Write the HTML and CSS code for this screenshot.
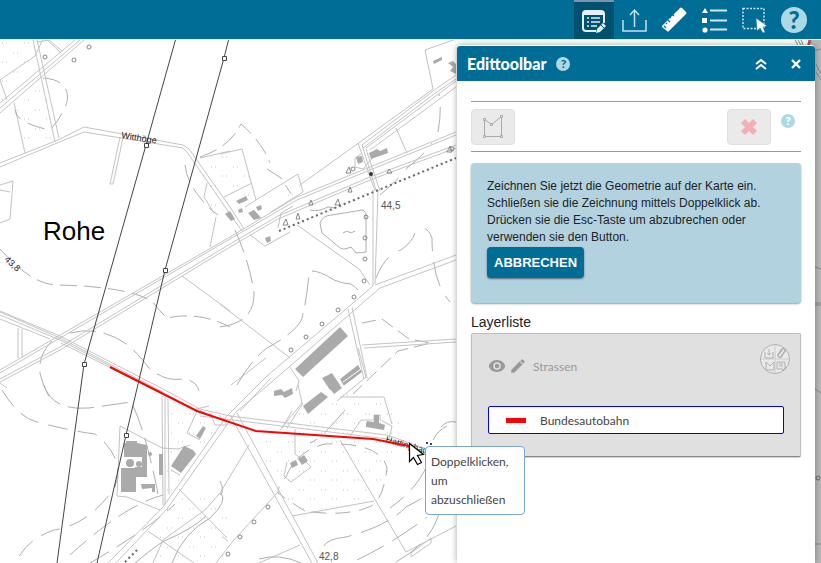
FILE: index.html
```html
<!DOCTYPE html>
<html lang="de">
<head>
<meta charset="utf-8">
<meta name="viewport" content="width=device-width, initial-scale=1">
<title>Edittoolbar</title>
<link rel="stylesheet" href="styles.css">
</head>
<body>
<header class="topbar">
  <button class="tool tool-active" type="button" aria-label="Editieren">
    <svg width="40" height="40" viewBox="0 0 40 40" fill="none" stroke="#e4f0f4" stroke-width="2">
      <path d="M22 31H12q-3 0-3-3V14q0-3 3-3h15q3 0 3 3v9" />
      <path d="M9 13h21" stroke-width="4"/>
      <path d="M17 18h9M17 22h9M17 26h6M13 18h2M13 22h2M13 26h2" stroke-width="1.6"/>
      <path d="m22 33 1-4 6-6 3 3-6 6z" fill="#e4f0f4" stroke="none"/><path d="m27 25 3 3" stroke="#00506f" stroke-width="1"/>
    </svg>
  </button>
  <button class="tool" type="button" aria-label="Export">
    <svg width="40" height="40" viewBox="0 0 40 40" fill="none" stroke="#c5e2ea" stroke-width="1.5"><path d="M9 20v11h23V20M20.500 27V10M16 15l4.500-5 4.500 5"/></svg>
  </button>
  <button class="tool" type="button" aria-label="Messen">
    <svg width="40" height="40" viewBox="0 0 40 40"><path d="M8 26 26 8q1-1 2 0l4 4q1 1 0 2L15 31q-1 1-2 0l-5-4z" fill="#fff"/><path d="m10 26 2 2m0-5 1 1m1-4 2 2m0-5 1 1m1-4 2 2m0-5 1 1m1-4 2 2" stroke="#006d96" stroke-width="1.200"/></svg>
  </button>
  <button class="tool" type="button" aria-label="Legende">
    <svg width="40" height="40" viewBox="0 0 40 40" fill="#fff"><path d="m8 13 3-5 3 5zM8 18h5v5H8z"/><circle cx="11" cy="30" r="2.600"/><path d="M16 10.500h17M16 20.500h17M16 29.500h17" stroke="#d4eaf0" stroke-width="1.800"/></svg>
  </button>
  <button class="tool" type="button" aria-label="Auswahl">
    <svg width="40" height="40" viewBox="0 0 40 40"><path d="M9 8.500h21v20H9z" fill="none" stroke="#d4eaf0" stroke-width="1.400" stroke-dasharray="2 1.500"/><path d="m22 18 1 13 3-3 3 5 2-1-2-5 4-1z" fill="#fff" stroke="#006d96" stroke-width=".5"/></svg>
  </button>
  <button class="tool help-large" type="button" aria-label="Hilfe"><span>?</span></button>
</header>
<main class="workspace">
  <svg class="map" viewBox="0 40 821 523" preserveAspectRatio="xMinYMin slice" role="img" aria-label="Karte">
    <defs>
      <pattern id="grass" width="22" height="19" patternUnits="userSpaceOnUse"><path d="M2 5h1m3 0h1M13 15h1m3 0h1" stroke="#c4c4c4" stroke-width="1"/></pattern>
    </defs>
    <g fill="url(#grass)">
      <path d="M0 40h33l2 20-26 36L0 105zM16 107l28-24 11 57-30 12zM200 160l20-10v60h-9zM220 154l22-5 13 50-32-6zM270 198l27-24 5 18-37 17z"/>
      <path d="m170 396 60 24-65 95zM150 530l40-40 35 5 10 70H150zM253 437l86-46 54 10 12 45-33 60-80 5z"/>
    </g>
    <g class="fine">
      <path d="M0 80 35 56l9-19 17 16M0 80l7 20M14 103l11 50M37 42l12-2 13 11M0 185l13-4-3 38L0 223M0 190l10 2M200 158l30-7M207 183l-3 14 10 16"/>
      <path d="M220 154l22-5 14 51-11 7M224 197l16-8 12-6M256 200l42-26 5 18-32 20M300 185l60-43 73-53-8-39 31-11M396 128l11 25M375 155l-12 14-8-2v-9l6-4"/>
      <path d="M182 276 230 311M250 235l15 11 25-14M297 225l62 44 11 16M220 304l70 54M290 367l9 14-3 10M358 348l8 29-29 24M216 217l-6 30"/>
      <path d="M18 328v30M22 329v28M0 383l7 5M162 448l-42-22-3 70 10 1 33 13M162 448l16 1 12-4M179 489l47 48M148 531l46 32M205 413l-7-4-11 24 13 7M192 410l17-4M210 413l5 12h12l-8-10M171 470l9 5M231 385l35-27M298 385l4 18-22 27M303 403l-16 25M340 397h44l8 27M350 436l11-16h13v-5h6v5l12 6-3 13M340 440l66 112 50-26M292 516l82-15M295 429v25l10 7 6 6M287 462l-3 14 7 6 20-15M249 445l-29 48-15 17-42 30-10 23M278 492l-45 49-17 22M259 563l41-18M223 537l5 4"/>
      <path d="M278 228l3-15 12-7M411 553l20-15v5l-20 14z"/>
    </g>
    <g class="contour">
      <path d="M43 78q28 2 24 24-5 15-17 28-34-7-35-20" stroke-dasharray="18 8"/>
      <path d="M0 249Q30 283 55 285q70 1 97 16 9 12 15 17 32-7 63 9" stroke-dasharray="17 7"/>
      <path d="M44 385q8 26 45 23l42-6q14 26 27 92" stroke-dasharray="26 8"/>
      <path d="M52 341q-14 14-12 32 3 14 10 25M70 333q30-8 58 12 14 13 20 22 16 15 35 12 13 1 16 12" stroke-dasharray="26 8"/>
      <path d="M2 390q17 28 35 32 34 9 58 12 31 24 20 53-26 38-61 43-29 10-38 33" stroke-dasharray="20 10"/>
      <path d="M70 555q55-50 93-60M90 563q60-35 85-59" stroke-dasharray="22 9"/>
      <path d="M185 165q2 18 17 35 6 8 16 15M200 157q30-10 41-33 21 18 29 39m-3 6 14 9 10 16" stroke-dasharray="18 7"/>
      <path d="M235 230q15 34 19 63 1 30-35 34" stroke-dasharray="24 8"/>
      <path d="M237 385q14-25 30-37 31-17 35-30 5-20 7-44" stroke-dasharray="28 8"/>
      <path d="M312 271q8 0 22 9 10 4 17 4 3 2 7 6"/>
      <path d="M362 323l20-4 27 20 22 4-33 8-45 43" stroke-dasharray="14 6"/>
      <path d="M376 278q9-23 25-28 11-8 14-17 11-11 17 5 0 44 18 64M438 132q4-21 1-38M380 195q20-17 27-27 16-12 25-25" stroke-dasharray="25 11"/>
      <path d="M305 511q-13-8-27-18 0-9 8-16 10-26 39-33 56-2 62 24-4 34-18 39-24 10-64 4" stroke-dasharray="15 9"/>
      <path d="M427 465q-9 23-37 43M447 426q-9 4-14 14M456 422q-9-2-15 5M324 546q3-7 22-9 42-11 60-30l50-27M357 560q39-19 70-43M440 510q-8 33-46 53M345 410q-26 31-35 33" stroke-dasharray="30 10"/>
      <path d="M172 563q11-30 38-45 18-17 11-25M135 563q19-16 29-22 27-11 42-25M259 559q20-6 42 4M220 495q5-4 0-14M322 233l-2-10q3-8 12-8l30-5q5 1 4 8v34l-10 1-5-6q-9 4-12 0z"/>
      <path d="M343 233q4-3 6-1t6-1M310 210q8 2 18-3l7 1"/>
    </g>
    <g class="road">
      <path d="M33 40l22 102M37 40l22 98M0 103 75 40M0 108 80 40M0 113 84 40"/>
      <path d="M0 163 58 140 84 127 183 145 189 149 230 207M0 167 57 143 84 132 183 148 187 152 230 214M120 137l-10 47h3l10-46M230 207l14 22M230 214l12 17"/>
      <path d="M0 370 55 338 230 237 297 197 370 167 456 132M0 373 60 338 230 239 297 200 370 170 456 135M0 379 60 347 230 244 278 216 370 177 456 145M0 382 60 350 230 247 278 219 370 180 456 148"/>
      <path d="M362 145l71-54 23-16M363 148l71-54 22-15M366 148l90-67M370 150l86-63M362 145l14 45M366 149l14 42M358 143l17 48"/>
      <path d="M0 311 60 336 163 389 200 409 230 416 387 435 427 449M0 315 60 340 163 393 200 413M0 319 50 339M61 343l110 55M0 312l60 26 103 54M200 416l187 23 40 14"/>
      <path d="M373 190v96L267 376 226 417 163 507 108 563M378 190l-3 94M375 285l81-30M380 288l76-28M380 288 267 386 236 412 167 509 116 563M348 309l16 70M352 307l15 71M362 345l94-6M364 348l92-6"/>
      <path d="M162 396l1 109M165 397v108M168 399l1 95M230 415l82 148M237 413l81 150M271 378l-31 33M292 411l-10 17"/>
    </g>
    <g class="building">
      <path d="m295 369 45-42 8 9-45 41zM322 378l10-5 8 12-10 5zM340 379l18-14 4 7-18 14zM303 406l18-14 7 5-20 17zM328 386l8-5 6 7-8 6zM274 391l7-2 3 3 8-4 1 6-8 4-3-3-8 1z"/>
      <path d="m369 153 8-4 3 2 7-3 1 5-17 6zM356 157l6-1 1 6-5 2zM433 61l9-4v3l-8 4zM448 63l5-2 3 3v10l-6-3 3-4zM236 201l10-5 2 4-9 4zM238 210l4-2 1 4-4 1zM225 214l5-3 5 8-4 2zM248 213l6-3 3 3 4 5-7 2zM256 207l5-2 1 4-4 2zM265 238l5-2 1 5-4 2z"/>
      <path d="M124 443h2v-2h11v2l10 2v32h-11v15h-15v-24h14v-11h-11zM159 454h4v21h-4zM141 484h14v8h-3v-4l-10 1zM184 446l9 4 3 4-15 19-10-7zM196 436l7-10 3 2-6 11zM366 424l1-3 7 1v-7h5v8l6 2-1 5-18-3zM290 463l6-3 2 5-6 3zM298 459l6-4 4 6-6 4z"/>
      <path d="M126 457h16v10h-16z" fill="#fff"/>
      <circle cx="130" cy="463" r="4"/><circle cx="139" cy="464" r="3"/><circle cx="150" cy="454" r="2"/>
      <path d="m343 382 18-13m-17 17 18-13" stroke="#fff" stroke-width="1" fill="none"/>
    </g>
    <g class="trees">
      <circle cx="45" cy="57" r="2"/><circle cx="74" cy="60" r="2"/><circle cx="89" cy="47" r="2"/><circle cx="366" cy="217" r="2"/><circle cx="365" cy="238" r="2"/><circle cx="365" cy="259" r="2"/><circle cx="364" cy="281" r="2"/><circle cx="354" cy="297" r="2"/><circle cx="338" cy="310" r="2"/><circle cx="322" cy="324" r="2"/><circle cx="306" cy="337" r="2"/><circle cx="291" cy="350" r="2"/><circle cx="268" cy="507" r="2"/><circle cx="254" cy="522" r="2"/><circle cx="240" cy="537" r="2"/><circle cx="228" cy="554" r="2"/><circle cx="452" cy="149" r="2"/><circle cx="353" cy="169" r="2"/>
      <path d="m346 173 3-6 2 6zm2 19 2-5 2 5zm-39 13 2-5 2 5zm26 0 3-6 2 6zm-39 14 2-6 2 6zm-13 6 3-6 2 6zm164-73 3-6 2 6zM387 173l2-4 3 4z"/>
    </g>
    <path d="M279 231 456 158" class="hedge"/>
    <path d="m125 562 13-13" class="hedge"/>
    <circle cx="371" cy="174" r="2" fill="#333"/>
    <g class="power"><path d="M176 38 146 145 84 364 57 563M229 38l-5 20-59 212-39 165-29 128"/>
      <path d="M144.500 143.500h4v4h-4zM222.500 56.500h4v4h-4zM163.500 268.500h4v4h-4zM82.500 362.500h4v4h-4zM124.500 433.500h4v4h-4z" fill="#fff"/></g>
    <g class="map-label">
      <text x="43" y="240" class="place">Rohe</text>
      <text x="121" y="138" transform="rotate(9 121 138)" class="street">Witthöge</text>
      <text x="4" y="260" transform="rotate(43 4 260)" class="street">43,8</text>
      <text x="381" y="209" class="height">44,5</text><text x="319" y="560" class="height">42,8</text>
      <text x="385" y="442" transform="rotate(16 385 442)" class="street">Hattinghaus</text>
    </g>
    <path d="m110 367 87 44 59 20 117 8 36 7" fill="none" stroke="#f00" stroke-width="2"/>
    <path d="M426 443h2m2 1h2" stroke="#444" stroke-width="2"/>
    <path d="m409.500 443.500v18l4-4 4 7 4-2-4-7 6-1z" fill="#fff" stroke="#000" stroke-width="1.200"/>
    <path d="M811 40h10v523h-10z" fill="#b8b8b8"/><path d="m810 40-2 8" stroke="#b75353" stroke-width="3"/>
    <path d="m795 40 4 7m-1-7 4 7m-1-7 3 7m12 17 5 10m-5-2 5 8M812 51l9-2M815 267l6 2M815 303h6m-6 2h6M815 389l6 4M815 544h6" stroke="#888" fill="none"/>
    <circle cx="818" cy="478" r="2" stroke="#666" fill="none"/>
  </svg>

  <section class="panel" aria-labelledby="panel-title">
    <header class="panel-head">
      <h1 id="panel-title">Edittoolbar</h1>
      <button class="help-small" type="button" aria-label="Hilfe">?</button>
      <button class="head-button head-first" type="button" aria-label="Einklappen"><svg width="14" height="14" viewBox="0 0 14 14" fill="none" stroke="#fff" stroke-width="2"><path d="m2 7 5-4 5 4M2 12l5-4 5 4"/></svg></button>
      <button class="head-button" type="button" aria-label="Schließen"><svg width="14" height="14" viewBox="0 0 14 14" stroke="#fff" stroke-width="2.400"><path d="m3 3 8 8M11 3l-8 8"/></svg></button>
    </header>
    <div class="panel-body">
      <div class="edit-tools">
        <button class="edit-button" type="button" aria-label="Fläche zeichnen" disabled>
          <svg width="24" height="24" viewBox="0 0 24 24" fill="none" stroke="#aaa"><path d="M3.500 4.500v17h17v-20l-10 8z"/><path d="M2.500 3.500h2v2h-2zM2.500 20.500h2v2h-2zM19.500 20.500h2v2h-2zM19.500.5h2v2h-2zM9.500 8.500h2v2h-2z" fill="#eaeaea"/></svg>
        </button>
        <button class="edit-button edit-delete" type="button" aria-label="Löschen" disabled>
          <svg width="18" height="18" viewBox="0 0 18 18" fill="#f2b0b0"><path d="m5 1 4 4 4-4 4 4-4 4 4 4-4 4-4-4-4 4-4-4 4-4-4-4z"/></svg>
        </button>
        <button class="help-small" type="button" aria-label="Hilfe">?</button>
      </div>
      <div class="notice">
        <p>Zeichnen Sie jetzt die Geometrie auf der Karte ein. Schließen sie die Zeichnung mittels Doppelklick ab. Drücken sie die Esc-Taste um abzubrechen oder verwenden sie den Button.</p>
        <button class="cancel" type="button">ABBRECHEN</button>
      </div>
      <h2 class="list-title">Layerliste</h2>
      <div class="layers">
        <div class="layer-head">
          <svg width="18" height="18" viewBox="0 0 24 24" fill="#999"><path d="M12 4C6 4 2 8 1 12c1 4 5 8 11 8s10-4 11-8c-1-4-5-8-11-8zm0 13a5 5 0 1 1 0-10 5 5 0 0 1 0 10z"/><circle cx="12" cy="12" r="3"/></svg>
          <svg width="18" height="18" viewBox="0 0 24 24" fill="#999"><path d="M3 17.200V21h3.800L18 10l-4-4zM20.700 7a1 1 0 0 0 0-1.400L18.400 3.300a1 1 0 0 0-1.400 0L15 5.200 18.800 9z"/></svg>
          <span>Strassen</span>
          <svg class="layer-logo" width="32" height="32" viewBox="0 0 32 32" fill="none" stroke="#b0b0b0"><circle cx="16" cy="16" r="14.500" fill="#e9e9e9"/><path d="M16 2v28M2 16h28" stroke="#ccc"/><path d="M6 9v6h8V9M10 6v6m-2-2 2 2 2-2M7 19v8h8v-8l-4 4zM18 19h8v6M18 19v7h6M20 21h4m-4 2h4M23 28l4-4"/><path d="m19 12 4-6q3-1 3 2l-4 6q-3 1-3-2l4-5" stroke-width="1.500"/></svg>
        </div>
        <button class="layer-item" type="button"><i class="swatch"></i>Bundesautobahn</button>
      </div>
    </div>
  </section>
  <div class="tooltip" role="tooltip">Doppelklicken, um abzuschließen</div>
</main>
</body>
</html>
```
FILE: styles.css
```css
* { box-sizing: border-box; }
html, body { height: 100%; }
body { margin: 0; display: flex; flex-direction: column; overflow: hidden; background: #fff; font-family: Lato, sans-serif; color: #333; }
button { font: inherit; border: 0; padding: 0; margin: 0; }
svg { display: block; flex: none; }

.topbar { flex: none; display: flex; justify-content: flex-end; height: 40px; padding-right: 7px; background: #006d96; border-bottom: 1px solid #e8eff2; }
.tool { width: 40px; height: 39px; background: none; overflow: hidden; }
.tool-active { background: #00506f; border-top: 2px solid #7d93ac; }
.tool-active svg { margin-top: -2px; }
.help-large { display: grid; place-items: center; }
.help-large span { width: 26px; height: 26px; border-radius: 50%; background: #add8e6; color: #006d96; font-size: 24px; line-height: 26px; font-weight: 900; }

.workspace { position: relative; flex: 1; min-height: 0; display: flex; justify-content: flex-end; padding: 5px 6px 0 0; }
.map { position: absolute; inset: 0; width: 100%; height: 100%; }
.fine { fill: none; stroke: #c2c2c2; }
.contour { fill: none; stroke: #aeaeae; }
.road { fill: none; stroke: #c4c4c4; }
.building { fill: #aaa; }
.trees { fill: none; stroke: #888; }
.hedge { fill: none; stroke: #666; stroke-width: 2; stroke-dasharray: 2 3; }
.power { fill: none; stroke: #444; }
.map-label { font-family: "Liberation Sans", sans-serif; fill: #222; }
.place { font-size: 26px; fill: #000; }
.street { font-size: 9px; }
.height { font-size: 10px; fill: #555; }

.panel { position: relative; width: 43%; min-width: 358px; max-width: 480px; background: #fff; border-top: 1px solid #fff; border-radius: 4px 4px 0 0; box-shadow: 0 0 6px rgba(0, 0, 0, .35); }
.panel-head { display: flex; align-items: center; height: 35px; padding: 0 12px 0 10px; background: #006d96; color: #fff; border-radius: 3px 3px 0 0; }
.panel-head h1 { margin: 0 10px 0 0; font-size: 16px; line-height: 20px; font-weight: 900; }
.help-small { width: 14px; height: 14px; border-radius: 50%; background: #add8e6; color: #006d96; font-size: 12px; line-height: 14px; font-weight: 900; text-align: center; }
.head-button { width: 14px; height: 14px; margin-left: 21px; background: none; }
.head-first { margin-left: auto; }
.panel-body { padding: 20px 14px; }

.edit-tools { display: flex; align-items: flex-start; height: 51px; padding: 7px 6px 0 0; border: solid #999; border-width: 1px 0; }
.edit-button { display: grid; place-items: center; width: 44px; height: 36px; background: #eaeaea; border: 1px solid #e0e0e0; border-radius: 4px; }
.edit-delete { margin: 0 10px 0 auto; }
.edit-tools .help-small { margin-top: 5px; background: #add8e6; color: #fff; }

.notice { margin-top: 11px; min-height: 140px; padding: 15px 16px 24px; background: #b2d2df; border-radius: 4px; box-shadow: 0 1px 2px rgba(0, 0, 0, .4); font-family: "Liberation Sans", sans-serif; }
.notice p { margin: 0; font-size: 12px; line-height: 17px; color: #222; white-space: normal; max-width: 288px; }
.cancel { height: 31px; margin-top: 1px; padding: 0 7px; background: #006d96; color: #fff; border-radius: 4px; box-shadow: 0 1px 2px rgba(0, 0, 0, .5); font-size: 13px; line-height: 31px; font-weight: 700; }

.list-title { margin: 10px 0 2px; font-family: "Liberation Sans", sans-serif; font-size: 14px; line-height: 18px; font-weight: 400; color: #222; }
.layers { padding: 8px 16px 22px; background: #e0e0e0; border: 1px solid #bdbdbd; border-bottom-color: #888; border-radius: 2px; box-shadow: 0 1px 1px rgba(0, 0, 0, .2); }
.layer-head { display: flex; align-items: center; height: 48px; gap: 3px; font-size: 12px; color: #999; }
.layer-head span { margin-left: 3px; }
.layer-logo { margin: -14px -7px 0 auto; }
.layer-item { display: flex; align-items: center; width: 100%; height: 28px; margin-top: 16px; padding: 0 17px; background: #fff; border: 1px solid #00f; border-radius: 2px; font-size: 12px; color: #444; }
.swatch { width: 20px; height: 5px; margin-right: 14px; background: #f00; }

.tooltip { position: absolute; left: 425px; top: 406px; width: 100px; padding: 5px; background: #fff; border: 1px solid #79a7cf; border-radius: 4px; font-size: 12px; line-height: 19px; color: #444; }
```
